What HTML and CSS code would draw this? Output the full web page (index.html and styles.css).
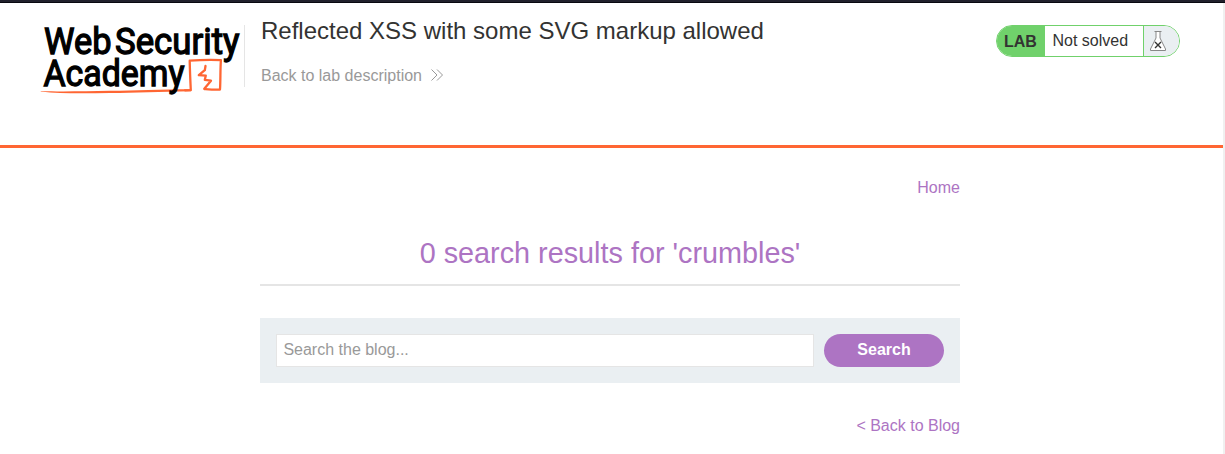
FILE: index.html
```html
<!DOCTYPE html>
<html lang="en">
<head>
<meta charset="utf-8">
<title>Reflected XSS with some SVG markup allowed</title>
<link rel="stylesheet" href="styles.css">
</head>
<body>
<div class="topbar"></div>
<div class="frame">
  <div class="page">
    <header class="header">
      <svg class="logo" width="204" height="80" viewBox="0 0 204 80" role="img" aria-label="Web Security Academy">
        <path class="underline" d="M.5 71C20 72 45 71.200 70 70.800S120 69.200 151 69.200L151 71.200C120 71.700 95 72.600 70 73S20 73.800 1 71.500Z"/>
        <path class="sketch" d="M145 70.300L150.800 70.200C150.300 60 149.900 50 149.700 40.700C160 39.900 171 39.700 180.900 40.100C180.200 50 180.600 60 180 69.500C175 69.800 170 69.400 164.500 69"/>
        <path class="bolt" d="M165.500 46L164.800 50.200L158.800 55.200L165.800 55.600L164.800 59.800L171 60.700L164.500 68.500"/>
        <text class="word" x="4" y="33.500" textLength="67.500" lengthAdjust="spacingAndGlyphs">Web</text>
        <text class="word" x="75" y="33.500" textLength="124.500" lengthAdjust="spacingAndGlyphs">Security</text>
        <text class="word" x="3.500" y="66" textLength="141" lengthAdjust="spacingAndGlyphs">Academy</text>
      </svg>
      <div class="titles">
        <h2 class="title">Reflected XSS with some SVG markup allowed</h2>
        <a class="back">Back to lab description
          <svg class="chevrons" width="12" height="12" viewBox="0 0 12 12"><path d="M.5 .5L6 6L.5 11.500M6 .5L11.500 6L6 11.500"/></svg>
        </a>
      </div>
      <div class="status">
        <span class="lab">LAB</span>
        <span class="state">Not solved</span>
        <span class="flask">
          <svg width="18" height="22" viewBox="0 0 18 22"><path class="glass" d="M5.500 1.500H12.500M7 1.500V8L1.500 19V20.500H16.500V19L11 8V1.500"/><path class="cross" d="M6 12L12 18M12 12L6 18"/></svg>
        </span>
      </div>
    </header>
    <main class="content">
      <nav class="nav"><a>Home</a></nav>
      <h1 class="results">0 search results for 'crumbles'</h1>
      <form class="search">
        <input class="query" type="text" placeholder="Search the blog...">
        <button class="submit" type="button">Search</button>
      </form>
      <div class="blog"><a>&lt; Back to Blog</a></div>
    </main>
  </div>
  <div class="track"></div>
</div>
</body>
</html>
```
FILE: styles.css
```css
* { box-sizing: border-box; }
body {
  margin: 0;
  height: 454px;
  overflow: hidden;
  background: #fff;
  color: #333332;
  font: 16px/20px "Liberation Sans", Arial, sans-serif;
}
.topbar { height: 3px; background: #20202c; border-bottom: 1px solid #080810; }
.frame { display: flex; height: 451px; }
.page { flex: 1; }
.track { width: 2px; background: #f0f0f0; }
.header {
  display: flex;
  align-items: flex-start;
  height: 145px;
  padding: 17px 43px 0 40px;
  border-bottom: 3px solid #ff6633;
}
.logo { flex: none; height: 80px; overflow: visible; }
.word { font: 400 36.500px Roboto, sans-serif; fill: #000; stroke: #000; stroke-width: 1.300; }
.underline { fill: #ff6633; }
.sketch, .bolt { fill: none; stroke: #ff6633; stroke-width: 2.300; stroke-linejoin: round; stroke-linecap: round; }
.titles {
  flex: 1;
  height: 62px;
  margin-top: 5px;
  padding-left: 16px;
  border-left: 1px solid #e5e5e5;
}
.title { margin: -8px 0 0; font-size: 24px; font-weight: 400; line-height: 28px; }
.back { display: flex; align-items: center; gap: 9px; margin-top: 21px; color: #999; }
.chevrons { margin-top: -2px; fill: none; stroke: #999; stroke-width: 1; }
.status {
  display: flex;
  width: 184px;
  height: 32px;
  margin-top: 5px;
  border: 1px solid #70d16b;
  border-radius: 16px;
  overflow: hidden;
  line-height: 30px;
}
.lab { width: 48px; padding: 1px 0 0 7px; background: #70d16b; font-weight: 700; }
.state { flex: 1; padding-left: 7.500px; border-right: 1px solid #70d16b; }
.flask { width: 35px; padding: 4px 0 0 5px; background: #eaeff2; line-height: 0; }
.glass { fill: #fff; stroke: #888; stroke-width: 1; }
.cross { fill: none; stroke: #333332; stroke-width: 1.400; }
.content { width: 700px; margin: 0 0 0 260px; padding-top: 30px; color: #ad74c3; }
.nav, .blog { text-align: right; }
.results {
  height: 88px;
  margin: 0;
  padding-top: 38px;
  border-bottom: 2px solid #e5e5e5;
  font-size: 28.800px;
  font-weight: 400;
  line-height: 34px;
  text-align: center;
}
.search { display: flex; gap: 10px; height: 65px; margin: 32px 0 33px; padding: 16px; background: #eaeff2; }
.query {
  flex: 1;
  height: 33px;
  padding: 0 6.400px 2px;
  border: 1px solid #e5e5e5;
  background: #fff;
  font: inherit;
}
.query::placeholder { color: #999; opacity: 1; }
.submit {
  width: 120px;
  height: 33px;
  padding: 0 0 1px;
  border: 0;
  border-radius: 17px;
  background: #ad74c3;
  color: #fff;
  font: 700 16px "Liberation Sans", Arial, sans-serif;
}
```
